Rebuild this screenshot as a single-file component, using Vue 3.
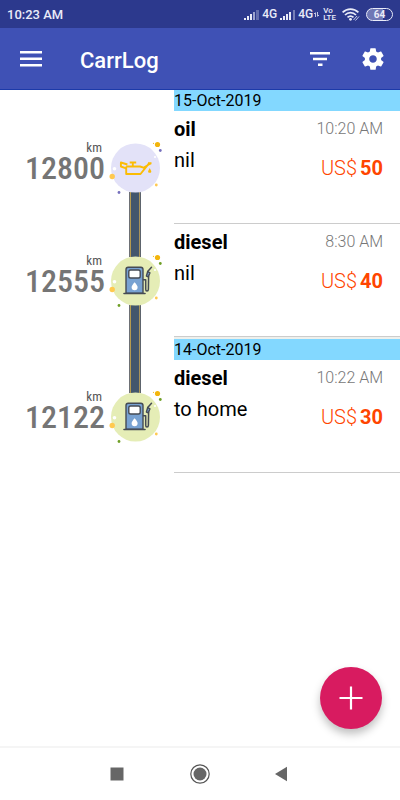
<template>
  <div class="app">
    <div class="status-bar">
      <span class="clock">10:23 AM</span>
      <div class="status-icons">
        <svg class="signal" width="15" height="11" viewBox="0 0 15 11" aria-hidden="true">
          <path d="M0 9h2v2H0zM3 7h2v4H3zM6 5h2v6H6z" fill="#e9ebf8" />
          <path d="M9 3h2v8H9z" fill="#e9ebf8" opacity=".6" />
          <path d="M12 1h3v10h-3z" fill="#e9ebf8" opacity=".3" />
        </svg>
        <span class="net">4G</span>
        <svg class="signal" width="15" height="11" viewBox="0 0 15 11" aria-hidden="true">
          <path d="M0 9h2v2H0zM3 7h2v4H3zM6 5h2v6H6zM9 3h2v8H9z" fill="#e9ebf8" />
          <path d="M13 1h2v10h-2z" fill="#e9ebf8" opacity=".4" />
        </svg>
        <span class="net">4G</span>
        <svg class="data" width="5" height="5" viewBox="0 0 5 5" aria-hidden="true">
          <path d="M1.500 5V1M0 2l1.500-1.500M3.500 0v4M5 3L3.500 4.500" fill="none" stroke="#e9ebf8" stroke-width=".8" />
        </svg>
        <span class="volte"><span>Vo</span><span>LTE</span></span>
        <svg class="wifi" width="18" height="13" viewBox="0 0 18 13" aria-hidden="true">
          <g fill="none" stroke="#e9ebf8" stroke-width="1.700">
            <path d="M.6 4.400C5-.1 12-.1 16.400 4.400" />
            <path d="M3 7c3-3.200 8-3.200 11 0" />
            <path d="M5.500 9.400c2-1.800 4-1.800 6 0" />
          </g>
          <circle cx="8.500" cy="11.300" r="1.400" fill="#e9ebf8" />
          <path d="M11.500 12l3.500-4M13.500 12.500l3.500-4" stroke="#c5caea" stroke-width="1" />
        </svg>
        <span class="battery">64</span>
      </div>
    </div>

    <header class="toolbar">
      <button class="icon-btn" aria-label="Open menu">
        <svg width="22" height="16" viewBox="0 0 22 16">
          <path d="M0 0h22v2.400H0zM0 6.500h22v2.400H0zM0 13h22v2.400H0z" fill="#fff" />
        </svg>
      </button>
      <h1>CarrLog</h1>
      <button class="icon-btn" aria-label="Filter">
        <svg width="20" height="14" viewBox="0 0 20 14">
          <path d="M0 0h20v2.400H0zM3 5.800h14v2.400H3zM8 11.500h4.500v2.400H8z" fill="#fff" />
        </svg>
      </button>
      <button class="icon-btn" aria-label="Settings">
        <svg width="26" height="26" viewBox="0 0 24 24">
          <path fill="#fff" d="M19.430 12.980c.04-.32.07-.64.07-.98s-.03-.66-.07-.98l2.110-1.650c.19-.15.24-.42.12-.64l-2-3.460c-.12-.22-.39-.3-.61-.22l-2.490 1c-.52-.4-1.080-.73-1.690-.98l-.38-2.650C14.460 2.180 14.250 2 14 2h-4c-.25 0-.46.18-.49.42l-.38 2.650c-.61.25-1.170.59-1.690.98l-2.490-1c-.23-.09-.49 0-.61.22l-2 3.460c-.13.22-.07.49.12.64l2.110 1.650c-.04.32-.07.65-.07.98s.03.66.07.98l-2.110 1.650c-.19.15-.24.42-.12.64l2 3.460c.12.22.39.3.61.22l2.490-1c.52.4 1.080.73 1.690.98l.38 2.650c.03.24.24.42.49.42h4c.25 0 .46-.18.49-.42l.38-2.650c.61-.25 1.170-.59 1.690-.98l2.490 1c.23.09.49 0 .61-.22l2-3.460c.12-.22.07-.49-.12-.64l-2.110-1.650zM12 15.500c-1.930 0-3.500-1.570-3.500-3.500s1.570-3.500 3.500-3.500 3.500 1.570 3.500 3.500-1.570 3.500-3.500 3.500z" />
        </svg>
      </button>
    </header>

    <main class="log">
      <section v-for="(day, d) in days" :key="day.date" class="day">
        <div class="row">
          <div class="lane">
            <span class="road" :class="{ hidden: d === 0 }"></span>
          </div>
          <h2 class="date">{{ day.date }}</h2>
        </div>

        <article v-for="entry in day.entries" :key="entry.km" class="row">
          <div class="odometer">
            <span class="unit">km</span>
            <span class="km">{{ entry.km }}</span>
          </div>
          <div class="lane">
            <span class="road above" :class="{ hidden: entry.km === firstKm }"></span>
            <svg v-if="entry.type === 'oil'" class="marker" width="50" height="50" viewBox="0 0 50 50" aria-hidden="true">
              <circle cx="25.500" cy="25" r="24.500" fill="#e3e2f8" />
              <circle cx="47.500" cy="1.500" r="2.600" fill="#f3b50b" />
              <circle cx="43.500" cy=".3" r=".6" fill="#f3b50b" />
              <circle cx="50.300" cy="7.500" r="1.400" fill="#7670bd" />
              <circle cx="45" cy="14" r="1.100" fill="#fff" />
              <circle cx="4.500" cy="25.700" r="1.800" fill="#fff" />
              <circle cx="2.200" cy="33.500" r="2.700" fill="#ffc950" />
              <circle cx="46.300" cy="42" r="1.400" fill="#ffc950" />
              <circle cx="9" cy="49.500" r="1.400" fill="#7670bd" />
              <g fill="none" stroke="#fbbc04" stroke-width="1.900" stroke-linejoin="round">
                <path d="M16.200 23.500h13.800l3.500 1.200 7-4.200M39 20.300l-8.500 10.700H16.200v-7.500" />
                <path d="M16.200 25.300l-5.300-1.800v-4l6.500 2M22.800 23.500v-4M19.700 19.500h6.500M38 20.300h3.500" />
              </g>
              <path d="M39.700 25l1.400 2.700a1.500 1.500 0 1 1-2.800 0z" fill="#fbbc04" />
            </svg>
            <svg v-else class="marker" width="50" height="50" viewBox="0 0 50 50" aria-hidden="true">
              <circle cx="25.500" cy="25" r="24.500" fill="#e5edb6" />
              <circle cx="47.500" cy="1.500" r="2.600" fill="#f3b50b" />
              <circle cx="43.500" cy=".3" r=".6" fill="#f3b50b" />
              <circle cx="50.300" cy="7.500" r="1.400" fill="#6f9f26" />
              <circle cx="45" cy="14" r="1.100" fill="#fff" />
              <circle cx="4.500" cy="25.700" r="1.800" fill="#fff" />
              <circle cx="2.200" cy="33.500" r="2.700" fill="#ffc950" />
              <circle cx="46.300" cy="42" r="1.400" fill="#ffc950" />
              <circle cx="9" cy="49.500" r="1.400" fill="#6f9f26" />
              <g stroke="#454b54" stroke-width="1.400" stroke-linecap="round" stroke-linejoin="round">
                <path d="M16 37.300V13.500q0-2.200 2.200-2.200h12.600q2.200 0 2.200 2.200v23.800z" fill="#78a2d2" />
                <rect x="18.800" y="14" width="11.400" height="8" rx="1.800" fill="#fff" />
                <path d="M14 37.500h21" stroke-width="1.600" />
                <path d="M33.500 23.700h2.200v9.500q0 1.800 1.300 1.800t1.400-1.800L38.600 20M41.500 11.300l-3.800 4.200" fill="none" stroke-width="1.500" />
                <path d="M37.700 15.500l2.300 1.300-1.700 4-1.900-.8z" fill="#78a2d2" />
              </g>
              <path d="M24.600 26.300q3 3.300 3 5a3 3 0 0 1-6 0q0-1.700 3-5z" fill="#fff" />
            </svg>
            <span class="road below" :class="{ hidden: entry.km === lastKm }"></span>
          </div>
          <div class="details">
            <div class="line">
              <h3>{{ entry.type }}</h3>
              <time>{{ entry.time }}</time>
            </div>
            <div class="line">
              <p class="note">{{ entry.note }}</p>
              <p class="cost"><span>US$</span><b>{{ entry.cost }}</b></p>
            </div>
          </div>
        </article>
      </section>

      <button class="fab" aria-label="Add entry">
        <svg width="24" height="24" viewBox="0 0 24 24">
          <path d="M12 .5v23M.5 12h23" stroke="#fff" stroke-width="2.200" />
        </svg>
      </button>
    </main>

    <nav class="nav-bar">
      <button aria-label="Recent apps">
        <svg width="20" height="20" viewBox="0 0 20 20"><path d="M3.500 3.500h13v13h-13z" fill="#666" /></svg>
      </button>
      <button aria-label="Home">
        <svg width="20" height="20" viewBox="0 0 20 20">
          <circle cx="10" cy="10" r="9.200" fill="none" stroke="#555" stroke-width="1.200" />
          <circle cx="10" cy="10" r="6.500" fill="#666" />
        </svg>
      </button>
      <button aria-label="Back">
        <svg width="20" height="20" viewBox="0 0 20 20"><path d="M2 10l12-7.300v14.600z" fill="#666" /></svg>
      </button>
    </nav>
  </div>
</template>

<script setup>
import { ref, computed } from 'vue';

const days = ref([
  {
    date: '15-Oct-2019',
    entries: [
      { type: 'oil', note: 'nil', time: '10:20 AM', km: 12800, cost: 50 },
      { type: 'diesel', note: 'nil', time: '8:30 AM', km: 12555, cost: 40 }
    ]
  },
  {
    date: '14-Oct-2019',
    entries: [
      { type: 'diesel', note: 'to home', time: '10:22 AM', km: 12122, cost: 30 }
    ]
  }
]);

const allKm = computed(() => days.value.flatMap((day) => day.entries.map((e) => e.km)));
const firstKm = computed(() => allKm.value[0]);
const lastKm = computed(() => allKm.value[allKm.value.length - 1]);
</script>

<style>
body { margin: 0; background: #fff; }
</style>

<style scoped>
.app {
  display: flex;
  flex-direction: column;
  min-height: 100vh;
  font-family: Roboto, "Liberation Sans", sans-serif;
  color: #000;
}
h1, h2, h3, p { margin: 0; }
button {
  display: flex;
  align-items: center;
  justify-content: center;
  padding: 0;
  border: none;
  background: none;
  cursor: pointer;
}
svg { display: block; flex: none; }

/* Status bar */
.status-bar {
  display: flex;
  justify-content: space-between;
  align-items: center;
  box-sizing: border-box;
  height: 28px;
  padding: 0 7px;
  background: #2c398d;
  color: #e9ebf8;
}
.clock { font-size: 13px; font-weight: 500; }
.status-icons { display: flex; align-items: center; gap: 3px; }
.net { font-size: 12px; font-weight: 500; }
.data { align-self: flex-end; margin: 0 1px 4px -2px; }
.volte {
  display: flex;
  flex-direction: column;
  font-size: 8px;
  line-height: 7px;
  font-weight: 500;
}
.wifi { margin: 0 3px; }
.battery {
  box-sizing: border-box;
  width: 27px;
  height: 13px;
  border: 1px solid #e9ebf8;
  border-radius: 7px;
  background: linear-gradient(90deg, #6f78b5 64%, #2c398d 64%);
  font-size: 10px;
  line-height: 11px;
  font-weight: 700;
  text-align: center;
}

/* Toolbar */
.toolbar {
  display: flex;
  align-items: center;
  box-sizing: border-box;
  height: 62px;
  padding: 0 6px 0 10px;
  border-bottom: 1px solid #1c3aa9;
  background: #3f51b5;
}
.toolbar h1 {
  flex: 1;
  padding: 4px 0 0 28px;
  color: #fff;
  font-size: 22px;
  line-height: 28px;
  font-weight: 500;
}
.icon-btn { width: 42px; height: 42px; }
.icon-btn + .icon-btn { margin-left: 11px; }

/* Log */
.log { flex: 1; }
.row { display: flex; }
.lane {
  display: flex;
  flex-direction: column;
  align-items: center;
  flex: none;
  width: 50px;
  margin-right: 14px;
}
.lane:first-child { margin-left: 110px; }
/* verge, yellow line and asphalt, mirrored on the right */
.road {
  flex: 1;
  width: 12px;
  background: linear-gradient(
    90deg,
    #6d7075 0 1px,
    #b59a4e 1px 2px,
    #42566c 2px 10px,
    #a8935a 10px 11px,
    #5d646c 11px 12px
  );
}
.road.above { flex: none; height: 33px; margin-bottom: -1px; }
.road.below { margin-top: -1px; }
.road.hidden { visibility: hidden; }
.marker { position: relative; overflow: visible; }
.date {
  flex: 1;
  background: #83d8ff;
  font-size: 16px;
  line-height: 21px;
  font-weight: 400;
}
.day + .day .date { border-top: 2px solid #eef0ec; }
.odometer {
  display: flex;
  flex-direction: column;
  align-items: flex-end;
  box-sizing: border-box;
  flex: none;
  width: 110px;
  padding: 30px 5px 0 0;
  color: #757575;
}
.unit {
  padding-right: 3px;
  color: #555;
  font-family: "Roboto Condensed", Roboto, sans-serif;
  font-size: 13px;
  line-height: 14px;
}
.km {
  font-family: "Roboto Condensed", "Liberation Sans Narrow", Roboto, sans-serif;
  font-size: 32px;
  line-height: 26px;
  font-weight: 500;
}
.details {
  flex: 1;
  min-height: 112px;
  border-bottom: 1px solid #ccc;
}
.line {
  display: flex;
  justify-content: space-between;
  padding-right: 17px;
}
h3 { font-size: 20px; line-height: 36px; font-weight: 700; }
time { color: #777; font-size: 16px; line-height: 36px; font-weight: 300; }
.note { font-size: 20px; line-height: 26px; }
.cost {
  display: flex;
  gap: 3px;
  padding-top: 7px;
  color: #ff4500;
  font-size: 20px;
  line-height: 28px;
  font-weight: 300;
}
.cost b { font-weight: 700; }

.fab {
  position: fixed;
  right: 18px;
  bottom: 71px;
  width: 62px;
  height: 62px;
  border-radius: 50%;
  background: #d81b60;
  box-shadow: 0 5px 8px rgba(0, 0, 0, 0.25);
}

/* System navigation */
.nav-bar {
  display: flex;
  justify-content: center;
  align-items: center;
  gap: 63px;
  box-sizing: border-box;
  height: 54px;
  border-top: 2px solid #f5f5f5;
  background: #fff;
}
</style>
